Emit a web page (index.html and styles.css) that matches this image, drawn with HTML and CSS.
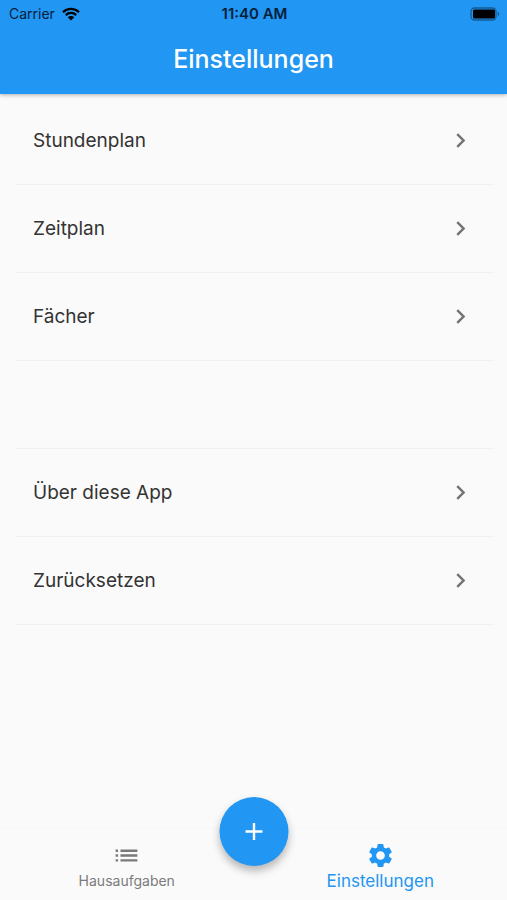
FILE: index.html
```html
<!DOCTYPE html>
<html lang="de">
<head>
  <meta charset="UTF-8">
  <meta name="viewport" content="width=device-width, initial-scale=1.0">
  <title>Einstellungen</title>
  <link rel="stylesheet" href="styles.css">
</head>
<body>
  <header class="app-bar">
    <div class="status-bar">
      <div class="carrier">
        <span>Carrier</span>
        <svg class="wifi" viewBox="0 0 18 14" aria-hidden="true">
          <path d="M1 5.2a11.4 11.4 0 0 1 16 0M3.8 8.1a7.4 7.4 0 0 1 10.4 0" fill="none" stroke="currentColor" stroke-width="2.3"/>
          <path d="M9 13.6 5.7 10.3a4.7 4.7 0 0 1 6.6 0z" fill="currentColor"/>
        </svg>
      </div>
      <span class="clock">11:40 AM</span>
      <svg class="battery" viewBox="0 0 30 14" aria-hidden="true">
        <rect x="1" y="1" width="25" height="12" rx="3.5" fill="none" stroke="currentColor" stroke-opacity=".4" stroke-width="1.3"/>
        <rect x="3" y="2.5" width="22" height="9" rx="1.5" fill="currentColor"/>
        <path d="M27.6 4.8c2 .7 2 3.7 0 4.4z" fill="currentColor" fill-opacity=".4"/>
      </svg>
    </div>
    <h1>Einstellungen</h1>
  </header>

  <!-- Liste der Einstellungen -->
  <main>
    <ul class="settings">
      <li>
        <a href="#stundenplan">Stundenplan
          <svg class="icon" viewBox="0 0 24 24" aria-hidden="true"><path d="M10 6 8.59 7.41 13.17 12l-4.58 4.59L10 18l6-6z"/></svg>
        </a>
      </li>
      <li>
        <a href="#zeitplan">Zeitplan
          <svg class="icon" viewBox="0 0 24 24" aria-hidden="true"><path d="M10 6 8.59 7.41 13.17 12l-4.58 4.59L10 18l6-6z"/></svg>
        </a>
      </li>
      <li>
        <a href="#faecher">Fächer
          <svg class="icon" viewBox="0 0 24 24" aria-hidden="true"><path d="M10 6 8.59 7.41 13.17 12l-4.58 4.59L10 18l6-6z"/></svg>
        </a>
      </li>
      <li class="spacer"></li>
      <li>
        <a href="#ueber">Über diese App
          <svg class="icon" viewBox="0 0 24 24" aria-hidden="true"><path d="M10 6 8.59 7.41 13.17 12l-4.58 4.59L10 18l6-6z"/></svg>
        </a>
      </li>
      <li>
        <a href="#zuruecksetzen">Zurücksetzen
          <svg class="icon" viewBox="0 0 24 24" aria-hidden="true"><path d="M10 6 8.59 7.41 13.17 12l-4.58 4.59L10 18l6-6z"/></svg>
        </a>
      </li>
    </ul>
  </main>

  <!-- Navigation unten -->
  <nav class="bottom-nav">
    <a href="#hausaufgaben">
      <svg class="icon" viewBox="0 0 24 24" aria-hidden="true"><path d="M3 13h2v-2H3v2zm0 4h2v-2H3v2zm0-8h2V7H3v2zm4 4h14v-2H7v2zm0 4h14v-2H7v2zM7 7v2h14V7H7z"/></svg>
      <span>Hausaufgaben</span>
    </a>
    <a href="#einstellungen" class="active" aria-current="page">
      <svg class="icon" viewBox="0 0 24 24" aria-hidden="true"><path d="M19.14 12.94c.04-.3.06-.61.06-.94 0-.32-.02-.64-.07-.94l2.03-1.58c.18-.14.23-.41.12-.61l-1.92-3.32c-.12-.22-.37-.29-.59-.22l-2.39.96c-.5-.38-1.03-.7-1.62-.94l-.36-2.54c-.04-.24-.24-.41-.48-.41h-3.84c-.24 0-.43.17-.47.41l-.36 2.54c-.59.24-1.13.57-1.62.94l-2.39-.96c-.22-.08-.47 0-.59.22L2.74 8.87c-.12.21-.08.47.12.61l2.03 1.58c-.05.3-.09.63-.09.94s.02.64.07.94l-2.03 1.58c-.18.14-.23.41-.12.61l1.92 3.32c.12.22.37.29.59.22l2.39-.96c.5.38 1.03.7 1.62.94l.36 2.54c.05.24.24.41.48.41h3.84c.24 0 .44-.17.47-.41l.36-2.54c.59-.24 1.13-.56 1.62-.94l2.39.96c.22.08.47 0 .59-.22l1.92-3.32c.12-.22.07-.47-.12-.61l-2.01-1.58zM12 15.6c-1.98 0-3.6-1.62-3.6-3.6s1.62-3.6 3.6-3.6 3.6 1.62 3.6 3.6-1.62 3.6-3.6 3.6z"/></svg>
      <span>Einstellungen</span>
    </a>
    <button type="button" class="fab" aria-label="Hinzufügen">
      <svg class="icon" viewBox="0 0 24 24" aria-hidden="true"><path d="M19 13h-6v6h-2v-6H5v-2h6V5h2v6h6v2z"/></svg>
    </button>
  </nav>
</body>
</html>
```
FILE: styles.css
```css
* {
  box-sizing: border-box;
}

body {
  display: flex;
  flex-direction: column;
  min-height: 100vh;
  margin: 0;
  font-family: Inter, 'Liberation Sans', sans-serif;
  background-color: #fafafa;
  color: #333;
}

a {
  color: inherit;
  text-decoration: none;
}

.icon {
  width: 29px;
  height: 29px;
  fill: currentColor;
}

.app-bar {
  background: #2196f3;
  box-shadow: 0 1px 4px rgba(0, 0, 0, 0.3);
}

.status-bar {
  display: grid;
  grid-template-columns: 1fr auto 1fr;
  align-items: center;
  height: 27px;
  padding: 0 7px 0 9px;
  font-size: 14px;
  color: #06203a;
}

.carrier {
  display: flex;
  align-items: center;
  gap: 7px;
}

.wifi {
  width: 18px;
  height: 14px;
  color: #000;
}

.clock {
  font-size: 15px;
  font-weight: 600;
}

.battery {
  justify-self: end;
  width: 30px;
  height: 14px;
  color: #000;
}

h1 {
  margin: 0;
  padding-bottom: 2px;
  font-size: 25px;
  font-weight: 500;
  line-height: 65px;
  text-align: center;
  color: #fff;
}

main {
  flex: 1;
  padding: 3px 13px 0 16px;
}

.settings {
  list-style: none;
  margin: 0;
  padding: 0;
}

.settings li {
  height: 88px;
  border-bottom: 1px solid #f0f0f0;
}

.settings a {
  display: flex;
  align-items: center;
  justify-content: space-between;
  height: 100%;
  padding: 0 19px 0 17px;
  font-size: 19px;
}

.settings .icon {
  color: #737373;
}

.bottom-nav {
  position: relative;
  display: flex;
  height: 72px;
  border-top: 1px solid #f7f7f7;
}

.bottom-nav a {
  flex: 1;
  display: flex;
  flex-direction: column;
  align-items: center;
  padding-top: 12px;
  font-size: 14px;
  line-height: 22px;
  color: #7a7a7a;
}

.bottom-nav .active {
  font-size: 17px;
  color: #2196f3;
}

/* Schwebender Button über der Navigation */
.fab {
  position: absolute;
  top: -32px;
  left: 50%;
  transform: translateX(-50%);
  display: flex;
  align-items: center;
  justify-content: center;
  width: 69px;
  height: 69px;
  padding: 0;
  border: none;
  border-radius: 50%;
  background: #2196f3;
  color: #fff;
  box-shadow: 0 5px 9px rgba(0, 0, 0, 0.28);
  cursor: pointer;
}
```
